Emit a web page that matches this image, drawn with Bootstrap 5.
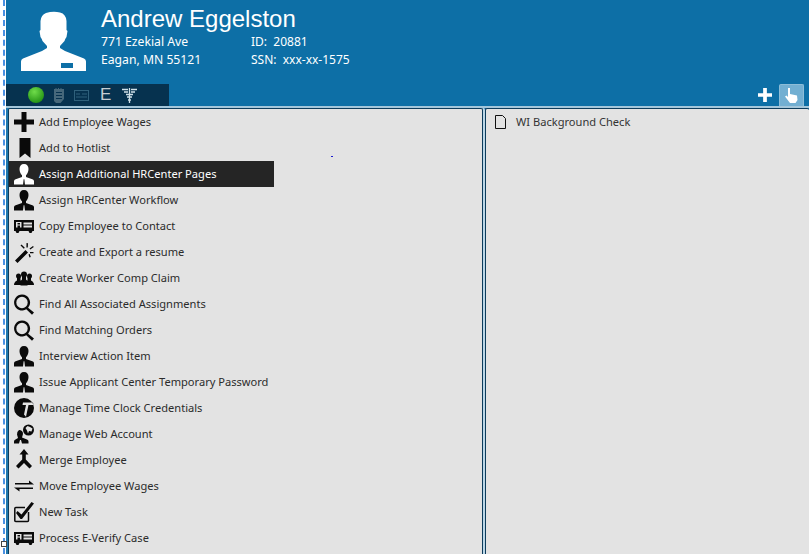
<!doctype html>
<html><head><meta charset="utf-8">
<link href="https://cdn.jsdelivr.net/npm/bootstrap@5.3.0/dist/css/bootstrap.min.css" rel="stylesheet">
<style>
html,body{height:554px;overflow:hidden;background:#fff}
body{position:relative}
.shell{height:554px;margin-left:3px;border-left:2px dashed #4a90e2;padding-left:1px;overflow:hidden}
.handle{position:absolute;left:1px;top:541px;width:6px;height:6px;border:1px solid #444;background:#fff;z-index:2}
.speck{position:absolute;left:331px;top:156px;width:2px;height:1px;background:#1a1ad0;z-index:2}
.hero{height:108px;background:#0d6fa6;color:#fff;position:relative;border-bottom:2px solid #a3c6da}
.avatar{width:65px;height:60px;margin:11px 0 0 15px}
.who{padding:5px 0 0 15px}
.who-name{font:24px/27px "Liberation Sans",Arial,sans-serif;width:300px}
.who-cols{font:12.2px/17.5px "Noto Sans",sans-serif;margin-top:1px}
.who-col1{width:150px}
.who-col2{font-size:12px}
.strip{position:absolute;left:0;bottom:0;width:163px;height:22px;background:#06324f;padding-left:22px;gap:10px}
.strip-e{font:17px/18px "Liberation Sans",sans-serif;color:#c5ced3;margin-left:1px}
.strip-cad{margin-left:1px}
.tabs{position:absolute;right:5px;bottom:0;gap:7px}
.tab-on{width:25px;height:22px;background:#72afd2;border:1px solid #8dbdd8;border-bottom:0;border-radius:2px 2px 0 0}
.panes{height:446px;padding:0 0 0 2px;gap:2px;background:#1f78ad}
.pane{background:#e3e3e3;border:1px solid #0c3c5c;border-bottom:0;border-radius:2px 2px 0 0;height:446px;overflow:hidden}
.pane-l{width:475px;box-shadow:2px 0 0 #bcd6e6}
.pane-r{flex:1;border-right:0}
.menu-list{width:265px;list-style:none;margin:0;padding:0}
.menu-row{height:26px;padding-left:5px;gap:5px;font:11.1px/26px "Noto Sans",sans-serif;color:#2b2b2b;white-space:nowrap}
.menu-row svg{flex:none;width:20px;height:22px;fill:#0a0a0a}
.menu-on{background:#252525;color:#fff}
.menu-on svg{fill:#fff;color:#252525}
.doc-row{padding-left:9px;gap:10px;height:26px;font:11.1px/26px "Noto Sans",sans-serif;color:#333}
</style></head><body>
<svg width="0" height="0" class="d-none">
<defs>
<symbol id="i-person" viewBox="0 0 20 22"><path d="M10 1C13 1 14.500 3 14.500 6C14.500 9 13.200 11 12 12.200V14L19 16.500Q20 17 20 18.500V21.500H11L10.400 16.500L10 16L9.600 16.500L9 21.500H0V18.500Q0 17 1 16.500L8 14V12.200C6.800 11 5.500 9 5.500 6C5.500 3 7 1 10 1Z"/></symbol>
<symbol id="i-plus" viewBox="0 0 20 22"><path d="M7.500 1H12.500V8.500H20V13.500H12.500V21H7.500V13.500H0V8.500H7.500Z"/></symbol>
<symbol id="i-mark" viewBox="0 0 20 22"><path d="M5.500 1H16.500V21L11 16.500L5.500 21Z"/></symbol>
<symbol id="i-card" viewBox="0 0 20 22"><path fill-rule="evenodd" d="M0 5H20V16H18.500L17.500 18H15.500L14.500 16H5.500L4.500 18H2.500L1.500 16H0ZM2 7V12.500H3.500V10.500H6V12.500H7.500V7ZM9.500 7.500V9.500H18V7.500ZM9.500 10.500V12.500H18V10.500ZM3.500 8H6V9.500H3.500Z"/></symbol>
<symbol id="i-wand" viewBox="0 0 20 22"><path d="M1 19.500L11.500 9L14 11.500L3.500 22ZM12.500 2L14 2.300L13.800 6.500H12.400ZM6.500 4.500L7.500 3.500L10.800 6.800L9.800 7.800ZM15.500 7.500L19 5L19.800 6L16.300 8.500ZM16 11H19.500V12.300H16ZM14.500 13.500L15.800 13L16.800 16L15.500 16.500Z"/></symbol>
<symbol id="i-group" viewBox="0 0 20 22"><circle cx="10" cy="7.500" r="3"/><circle cx="4.500" cy="9" r="2.500"/><circle cx="15.500" cy="9" r="2.500"/><path d="M3 10H6.500V13.500L8 15V18H0Q0 15 3 13.500ZM13.500 10H17V13.500Q20 15 20 18H12V15L13.500 13.500ZM8 9H12V12.500L13.500 14V18.500H6.500V14L8 12.500Z"/></symbol>
<symbol id="i-find" viewBox="0 0 20 22"><path fill-rule="evenodd" d="M8 1.500A8 8 0 0 1 14.100 14.700L20 19.600L18 21.800L12.300 16.300A8 8 0 1 1 8 1.500ZM8 3.800A5.700 5.700 0 1 0 8 15.200A5.700 5.700 0 0 0 8 3.800Z"/></symbol>
<symbol id="i-clock" viewBox="0 0 20 22"><path fill-rule="evenodd" d="M10 1A10 10 0 1 1 10 21A10 10 0 0 1 10 1ZM9 5.500L8.500 8H12L10 17.500L12 19.800L14.500 8H19.500L19 5.500Z"/></symbol>
<symbol id="i-web" viewBox="0 0 20 22"><path fill-rule="evenodd" d="M5 7A3.800 3.800 0 0 1 9 11L8 14.500L13 16.500Q14.500 17 14.500 18.500V20.500H8L7 17H6L5 20.500H0V18.500Q0 17 1.500 16.500L4 15L3 11.500Q2.800 8.500 5 7ZM14.500 1.500A5.500 5.500 0 1 1 14.500 12.500A5.500 5.500 0 0 1 14.500 1.500ZM11.500 5L13 7.500L14 10.500L15 8L17.500 8.500L18.500 5.500L16 4L13.500 3Z"/></symbol>
<symbol id="i-merge" viewBox="0 0 20 22"><path d="M10 0L14.500 5.500H11.800V10.500L18 17L15.500 19.500L10 14L4.500 19.500L2 17L8.200 10.500V5.500H5.500Z"/></symbol>
<symbol id="i-swap" viewBox="0 0 20 22"><path d="M1 8H15V5.500L20 9.500H1ZM0 12.500H19V14H5.500V16.500Z"/></symbol>
<symbol id="i-task" viewBox="0 0 20 22"><path fill="none" stroke="#0a0a0a" stroke-width="1.500" d="M14.500 11V19.500Q14.500 20.500 13.500 20.500H1.800Q.8 20.500 .8 19.500V7.500Q.8 6.500 1.800 6.500H11"/><path d="M3.500 10L7.500 13.500L17.500 1L20 2.500L8 18H6.500L2 12Z"/></symbol>
</defs></svg>
<span class="handle"></span><span class="speck"></span>
<div class="shell">
<header class="hero d-flex">
<svg class="avatar" viewBox="0 0 65 60" fill="#fff"><path fill-rule="evenodd" d="M25 2Q32 0 39 1.500Q45 3 45.500 10L45.500 19L46.500 20L45.500 26Q44 28 43.500 30L39 35V37L44 40L63 47.500Q65 48.500 65 50.500V60H0V50.500Q0 48.500 2 47.500L21 40L26 37V35L21.500 30Q21 28 19.500 26L18.500 20L19.500 19L19.500 10Q20 4 25 2ZM40 52V57H52V52Z"/></svg>
<div class="who">
<div class="who-name">Andrew Eggelston</div>
<div class="who-cols d-flex"><div class="who-col1">771 Ezekial Ave<br>Eagan, MN 55121</div><div class="who-col2">ID:&nbsp; 20881<br>SSN:&nbsp; xxx-xx-1575</div></div>
</div>
<div class="strip d-flex align-items-center">
<svg width="16" height="16" viewBox="0 0 18 18"><defs><radialGradient id="gl" cx=".4" cy=".3" r=".8"><stop offset="0" stop-color="#6fdc4a"/><stop offset="1" stop-color="#1b8a0e"/></radialGradient></defs><circle cx="9" cy="9" r="9" fill="url(#gl)"/></svg>
<svg width="10" height="15" viewBox="0 0 10 15" fill="#46687b"><path d="M0 1H1.500V0H2.500V1H4V0H5V1H6.500V0H7.500V1H10V11L6.500 15H2L0 13ZM2 4V5H8V4ZM2 7V8H8V7ZM2 10V11H8V10Z" fill-rule="evenodd"/></svg>
<svg width="15" height="11" viewBox="0 0 15 11" fill="none" stroke="#2f617c"><rect x=".5" y=".5" width="14" height="10"/><path d="M2 4H6M2 7H13M8 4H13"/></svg>
<span class="strip-e">E</span>
<svg class="strip-cad" width="15" height="15" viewBox="0 0 15 15" fill="none" stroke="#cfe0e8"><path d="M0 1.500H6M9 1.500H15M2 4H6M9 4H13M4 6.500H11M7.500 0V15M5 9H10M6 12H9" stroke-width="1.300"/></svg>
</div>
<div class="tabs d-flex align-items-end">
<svg class="mb-1" width="14" height="14" viewBox="0 0 15 15" fill="#fff"><path d="M5.500 0H9.500V5.500H15V9.500H9.500V15H5.500V9.500H0V5.500H5.500Z"/></svg>
<div class="tab-on d-flex align-items-center justify-content-center"><svg width="13" height="15" viewBox="0 0 13 15" fill="#fff"><path d="M3 0H5V6L12 7.500L12.500 12L10.500 15H5L0 8.500L1.500 7.500L3 9Z"/></svg></div>
</div>
</header>
<main class="panes d-flex">
<section class="pane pane-l">
<ul class="menu-list">
<li class="menu-row d-flex align-items-center"><svg><use href="#i-plus"/></svg>Add Employee Wages</li>
<li class="menu-row d-flex align-items-center"><svg><use href="#i-mark"/></svg>Add to Hotlist</li>
<li class="menu-row menu-on d-flex align-items-center"><svg><use href="#i-person"/></svg>Assign Additional HRCenter Pages</li>
<li class="menu-row d-flex align-items-center"><svg><use href="#i-person"/></svg>Assign HRCenter Workflow</li>
<li class="menu-row d-flex align-items-center"><svg><use href="#i-card"/></svg>Copy Employee to Contact</li>
<li class="menu-row d-flex align-items-center"><svg><use href="#i-wand"/></svg>Create and Export a resume</li>
<li class="menu-row d-flex align-items-center"><svg><use href="#i-group"/></svg>Create Worker Comp Claim</li>
<li class="menu-row d-flex align-items-center"><svg><use href="#i-find"/></svg>Find All Associated Assignments</li>
<li class="menu-row d-flex align-items-center"><svg><use href="#i-find"/></svg>Find Matching Orders</li>
<li class="menu-row d-flex align-items-center"><svg><use href="#i-person"/></svg>Interview Action Item</li>
<li class="menu-row d-flex align-items-center"><svg><use href="#i-person"/></svg>Issue Applicant Center Temporary Password</li>
<li class="menu-row d-flex align-items-center"><svg><use href="#i-clock"/></svg>Manage Time Clock Credentials</li>
<li class="menu-row d-flex align-items-center"><svg><use href="#i-web"/></svg>Manage Web Account</li>
<li class="menu-row d-flex align-items-center"><svg><use href="#i-merge"/></svg>Merge Employee</li>
<li class="menu-row d-flex align-items-center"><svg><use href="#i-swap"/></svg>Move Employee Wages</li>
<li class="menu-row d-flex align-items-center"><svg><use href="#i-task"/></svg>New Task</li>
<li class="menu-row d-flex align-items-center"><svg><use href="#i-card"/></svg>Process E-Verify Case</li>
</ul>
</section>
<section class="pane pane-r">
<div class="doc-row d-flex align-items-center"><svg width="11" height="14" viewBox="0 0 11 14" fill="none" stroke="#111"><path d="M.5.500H7.500L10.500 3.500V13.500H.5Z"/></svg>WI Background Check</div>
</section>
</main>
</div>
</body></html>
